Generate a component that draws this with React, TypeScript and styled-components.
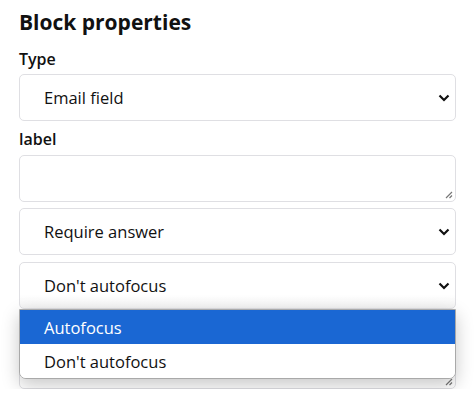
import styled, { createGlobalStyle } from "styled-components";

const GlobalStyle = createGlobalStyle`
  body {
    margin: 0;
    background: #ffffff;
    font-family: "Open Sans", "Noto Sans", sans-serif;
    color: #111111;
  }
`;

const Panel = styled.div`
  padding: 7px 19px 0 19px;
  width: 437px;
  display: flex;
  flex-direction: column;
`;

const Title = styled.h2`
  margin: 0 0 11px 0;
  font-size: 21px;
  line-height: 30px;
  font-weight: 700;
`;

const FieldLabel = styled.label<{ $gap: number }>`
  display: block;
  font-size: 16px;
  line-height: 22px;
  font-weight: 600;
  margin-bottom: ${(p) => p.$gap}px;
`;

const SelectWrap = styled.div`
  position: relative;
  margin-bottom: 7px;
`;

const SelectBox = styled.div<{ $shaded?: boolean }>`
  height: 45px;
  box-sizing: content-box;
  border: 1px solid #dfdfe3;
  border-radius: 5px;
  display: flex;
  align-items: center;
  justify-content: space-between;
  padding: 0 5px 0 24px;
  font-size: 16.5px;
  background: ${(p) =>
    p.$shaded ? "linear-gradient(#ffffff 70%, #f4f4f4)" : "#ffffff"};
`;

const TextArea = styled.div<{ $height: number; $mb: number }>`
  position: relative;
  height: ${(p) => p.$height}px;
  border: 1px solid #dfdfe3;
  border-radius: 5px;
  margin-bottom: ${(p) => p.$mb}px;
`;

const Grip = styled.svg`
  position: absolute;
  right: 2px;
  bottom: 2px;
`;

const Menu = styled.ul`
  position: absolute;
  left: 0;
  right: 0;
  top: 47px;
  margin: 0;
  padding: 0;
  list-style: none;
  background: #ffffff;
  border: 1px solid #a9a9a9;
  border-radius: 0 0 7px 7px;
  overflow: hidden;
  box-shadow: 0 6px 18px rgba(0, 0, 0, 0.22);
  z-index: 2;
`;

const Option = styled.li<{ $active?: boolean }>`
  height: 34px;
  display: flex;
  align-items: center;
  padding-left: 24px;
  font-size: 16.5px;
  color: ${(p) => (p.$active ? "#ffffff" : "#111111")};
  background: ${(p) => (p.$active ? "#1a67d3" : "#ffffff")};
`;

const Chevron = () => (
  <svg width="12" height="8" viewBox="0 0 12 8">
    <path d="M1.5 1.5 L6 6 L10.5 1.5" fill="none" stroke="#111" strokeWidth="2.2" />
  </svg>
);

const ResizeGrip = () => (
  <Grip width="9" height="9" viewBox="0 0 9 9">
    <path d="M8 2 L2 8 M8 5.5 L5.5 8" stroke="#777" strokeWidth="1.2" />
  </Grip>
);

const Select = ({
  value,
  shaded,
  options,
}: {
  value: string;
  shaded?: boolean;
  options?: { text: string; active?: boolean }[];
}) => (
  <SelectWrap>
    <SelectBox $shaded={shaded}>
      <span>{value}</span>
      <Chevron />
    </SelectBox>
    {options && (
      <Menu>
        {options.map((o) => (
          <Option key={o.text} $active={o.active}>
            {o.text}
          </Option>
        ))}
      </Menu>
    )}
  </SelectWrap>
);

export default function App() {
  return (
    <>
      <GlobalStyle />
      <Panel>
        <Title>Block properties</Title>
        <FieldLabel $gap={4}>Type</FieldLabel>
        <Select value="Email field" />
        <FieldLabel $gap={5}>label</FieldLabel>
        <TextArea $height={45} $mb={6}>
          <ResizeGrip />
        </TextArea>
        <Select value="Require answer" />
        <Select
          value="Don't autofocus"
          shaded
          options={[
            { text: "Autofocus", active: true },
            { text: "Don't autofocus" },
          ]}
        />
        <TextArea $height={71} $mb={0}>
          <ResizeGrip />
        </TextArea>
      </Panel>
    </>
  );
}
